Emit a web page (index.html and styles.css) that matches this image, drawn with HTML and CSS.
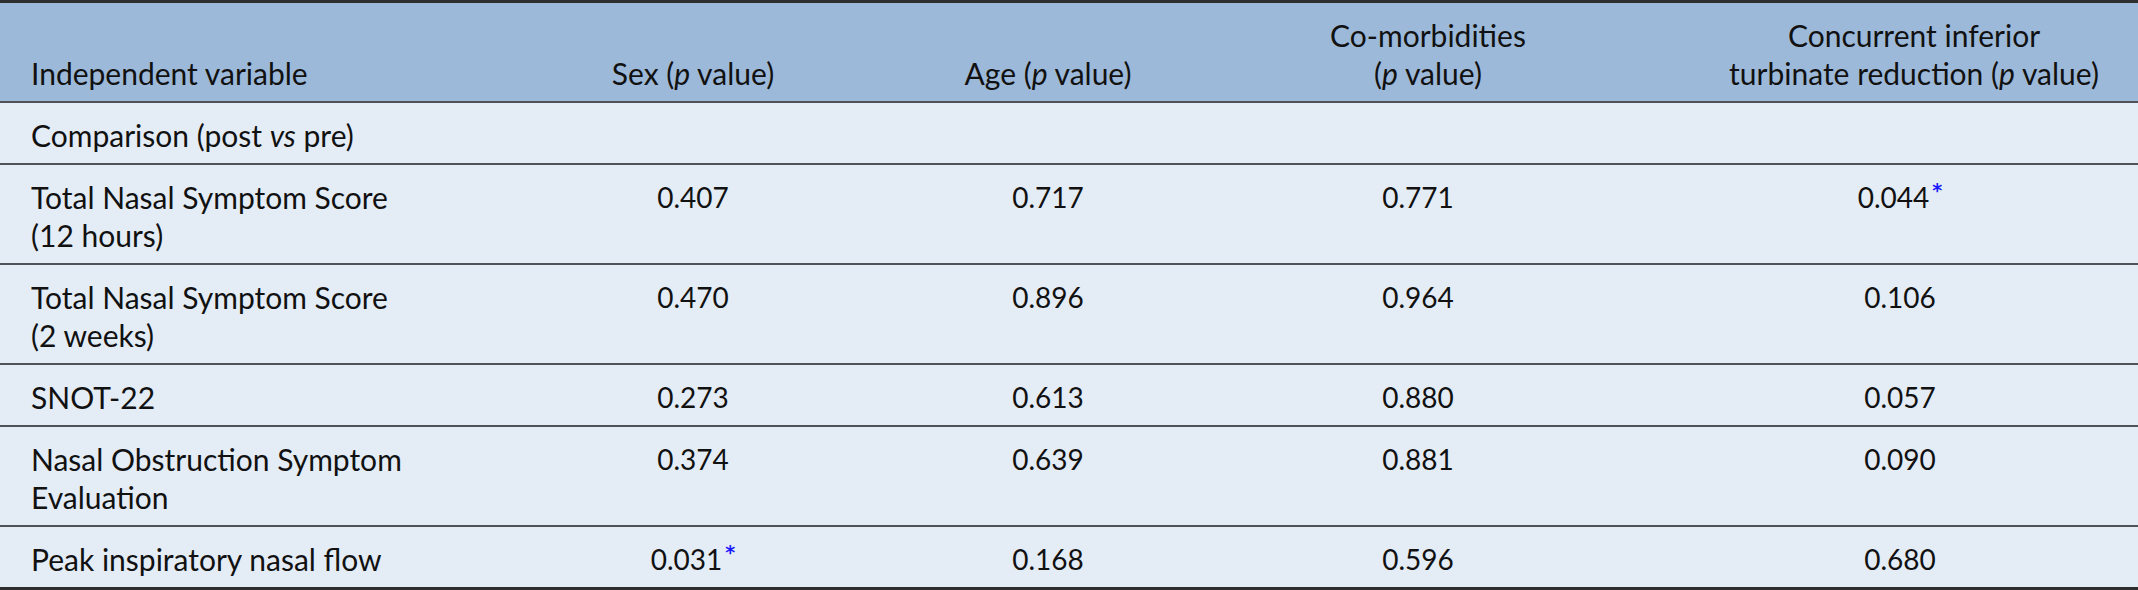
FILE: index.html
```html
<!DOCTYPE html>
<html lang="en">
<head>
<meta charset="utf-8">
<title>Table</title>
<link rel="stylesheet" href="styles.css">
</head>
<body>
<table class="data">
  <colgroup>
    <col class="c1"><col class="c2"><col class="c3"><col class="c4"><col class="c5">
  </colgroup>
  <thead>
    <tr>
      <th class="lbl">Independent variable</th>
      <th>Sex (<i>p</i> value)</th>
      <th>Age (<i>p</i> value)</th>
      <th class="sh">Co-morbidities<br>(<i>p</i> value)</th>
      <th class="sh2">Concurrent inferior<br>turbinate reduction (<i>p</i> value)</th>
    </tr>
  </thead>
  <tbody>
    <tr>
      <td class="lbl">Comparison (post <i>vs</i> pre)</td>
      <td></td><td></td><td></td><td></td>
    </tr>
    <tr>
      <td class="lbl">Total Nasal Symptom Score<br>(12 hours)</td>
      <td class="num">0.407</td><td class="num">0.717</td><td class="num">0.771</td><td class="num">0.044<sup class="ast">*</sup></td>
    </tr>
    <tr>
      <td class="lbl">Total Nasal Symptom Score<br>(2 weeks)</td>
      <td class="num">0.470</td><td class="num">0.896</td><td class="num">0.964</td><td class="num">0.106</td>
    </tr>
    <tr>
      <td class="lbl">SNOT-22</td>
      <td class="num">0.273</td><td class="num">0.613</td><td class="num">0.880</td><td class="num">0.057</td>
    </tr>
    <tr>
      <td class="lbl">Nasal Obstruction Symptom<br>Evaluation</td>
      <td class="num">0.374</td><td class="num">0.639</td><td class="num">0.881</td><td class="num">0.090</td>
    </tr>
    <tr>
      <td class="lbl">Peak inspiratory nasal flow</td>
      <td class="num">0.031<sup class="ast">*</sup></td><td class="num">0.168</td><td class="num">0.596</td><td class="num">0.680</td>
    </tr>
  </tbody>
</table>
</body>
</html>
```
FILE: styles.css
```css
html, body {
  margin: 0;
  padding: 0;
  background: #ffffff;
}

body {
  font-family: "Lato", "Liberation Sans", sans-serif;
  font-size: 30px;
  line-height: 38px;
  color: #111111;
}

.data {
  width: 2138px;
  table-layout: fixed;
  border-collapse: collapse;
  border-top: 3px solid #2e2e2e;
  border-bottom: 3px solid #2e2e2e;
}

.c1 { width: 464px; }
.c2 { width: 458px; }
.c3 { width: 252px; }
.c4 { width: 488px; }
.c5 { width: 476px; }

.data th {
  background: #9db9d9;
  font-weight: normal;
  text-align: center;
  vertical-align: bottom;
  padding: 13px 12px 9px;
  border-bottom: 2px solid #4f5358;
}

.data th.sh {
  padding-left: 32px;
}

.data th.sh2 {
  padding-left: 40px;
}

.data td {
  background: #e4ecf6;
  text-align: center;
  vertical-align: top;
  padding: 13px 12px 9px;
  border-bottom: 2px solid #4f5358;
}

.data td.num {
  font-size: 28px;
}

.data .lbl {
  text-align: left;
  padding-left: 31px;
}

.data i {
  font-style: italic;
}

.ast {
  font-family: "DejaVu Sans", sans-serif;
  font-weight: bold;
  color: #1a1aff;
  font-size: 19px;
  line-height: 0;
  vertical-align: 11px;
  margin-left: 3px;
}
```
